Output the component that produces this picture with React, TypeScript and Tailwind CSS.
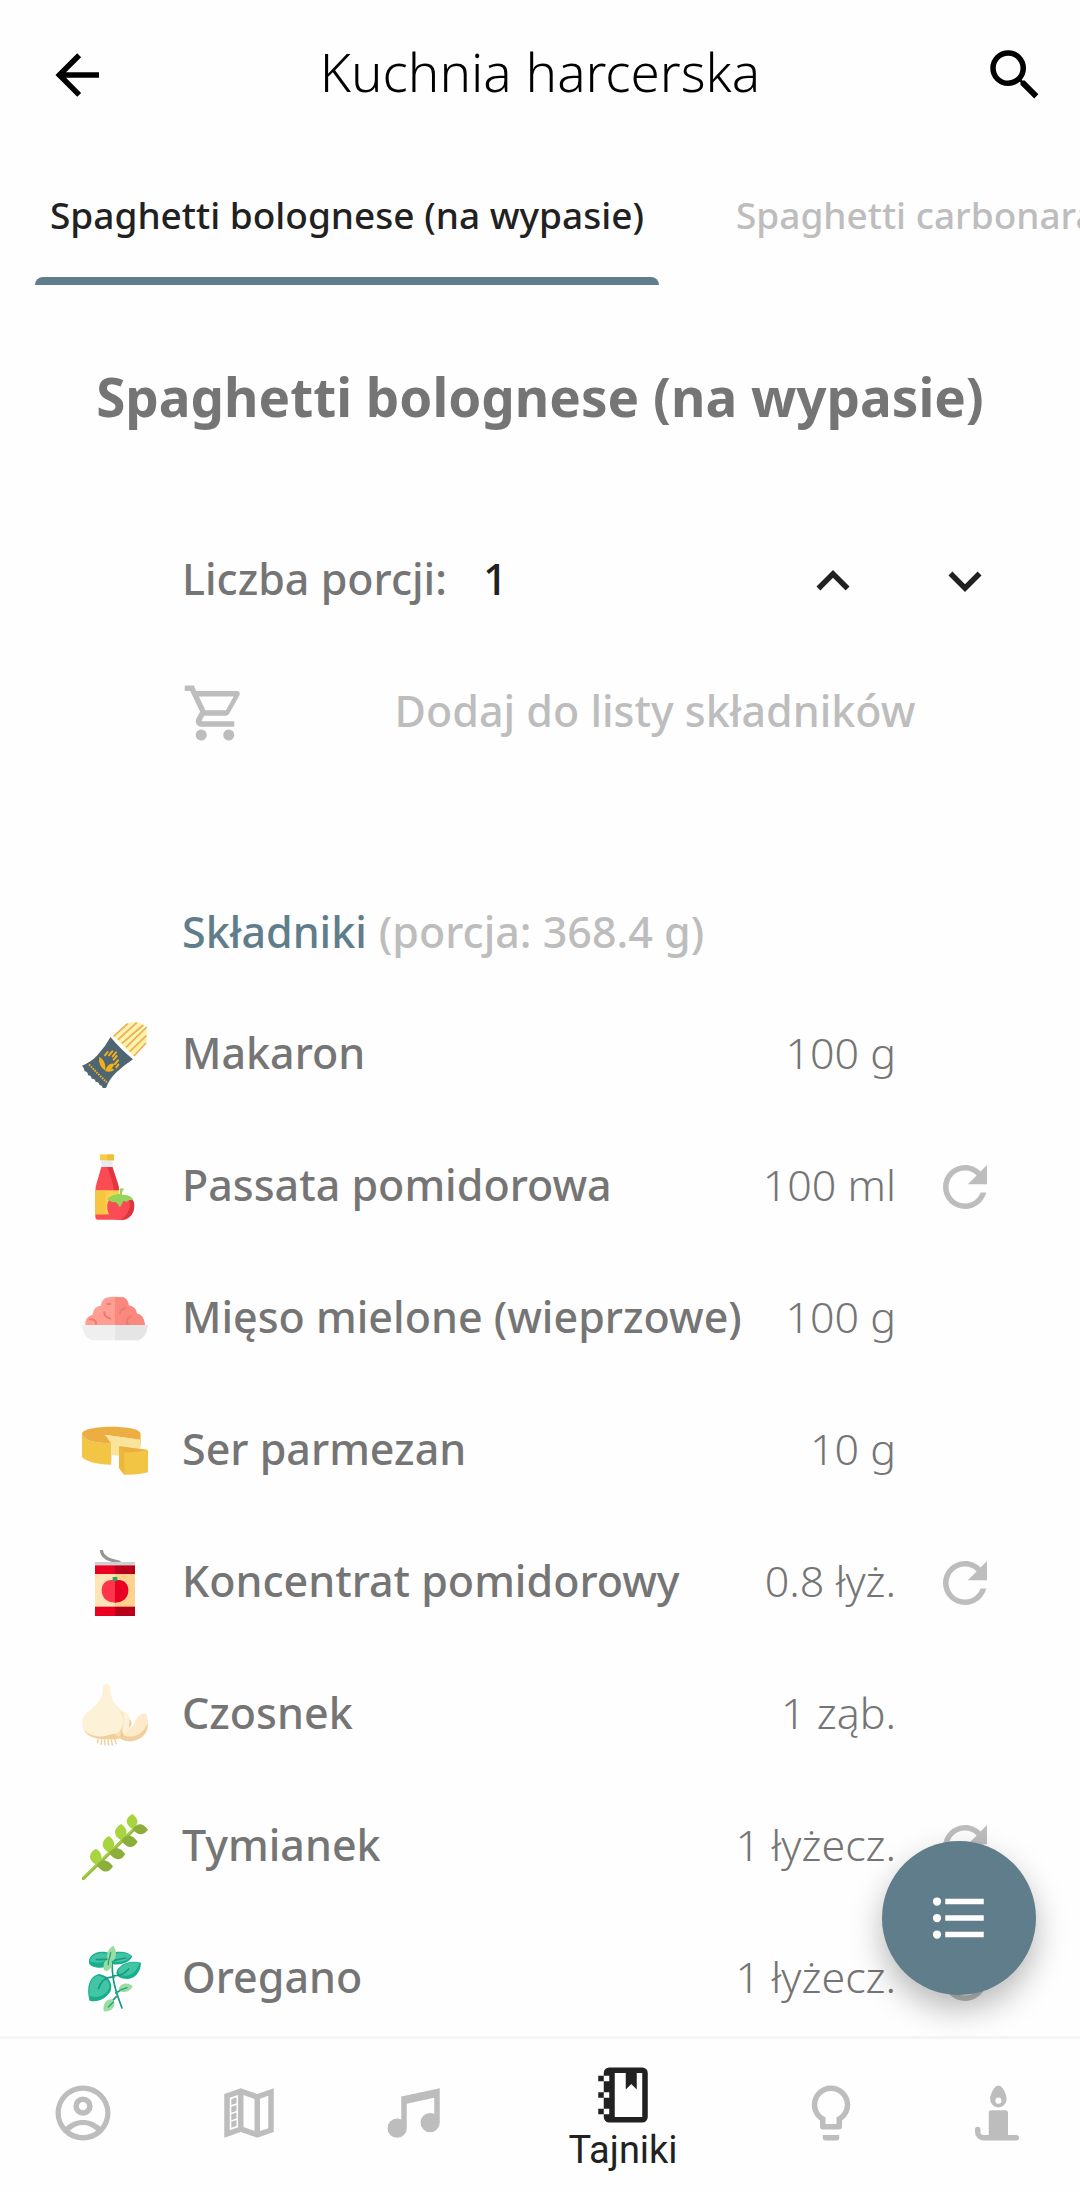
import type { ReactNode } from "react";

const icons = {
  back: "M20,11V13H8L13.5,18.5L12.08,19.92L4.16,12L12.08,4.08L13.5,5.5L8,11H20Z",
  search:
    "M9.5,3A6.5,6.5 0 0,1 16,9.5C16,11.11 15.41,12.59 14.44,13.73L14.71,14H15.5L20.5,19L19,20.5L14,15.5V14.71L13.73,14.44C12.59,15.41 11.11,16 9.5,16A6.5,6.5 0 0,1 3,9.5A6.5,6.5 0 0,1 9.5,3M9.5,5C7,5 5,7 5,9.5C5,12 7,14 9.5,14C12,14 14,12 14,9.5C14,7 12,5 9.5,5Z",
  up: "M7.41,15.41L12,10.83L16.59,15.41L18,14L12,8L6,14L7.41,15.41Z",
  down: "M7.41,8.58L12,13.17L16.59,8.58L18,10L12,16L6,10L7.41,8.58Z",
  cart: "M17,18A2,2 0 0,1 19,20A2,2 0 0,1 17,22C15.89,22 15,21.1 15,20C15,18.89 15.89,18 17,18M1,2H4.27L5.21,4H20A1,1 0 0,1 21,5C21,5.17 20.95,5.34 20.88,5.5L17.3,11.97C16.96,12.58 16.3,13 15.55,13H8.1L7.2,14.63L7.17,14.75A0.25,0.25 0 0,0 7.42,15H19V17H7C5.89,17 5,16.1 5,15C5,14.65 5.09,14.32 5.24,14.04L6.6,11.59L3,4H1V2M7,18A2,2 0 0,1 9,20A2,2 0 0,1 7,22C5.89,22 5,21.1 5,20C5,18.89 5.89,18 7,18M16,11L18.78,6H6.14L8.5,11H16Z",
  refresh:
    "M17.65,6.35C16.2,4.9 14.21,4 12,4A8,8 0 0,0 4,12A8,8 0 0,0 12,20C15.73,20 18.84,17.45 19.73,14H17.65C16.83,16.33 14.61,18 12,18A6,6 0 0,1 6,12A6,6 0 0,1 12,6C13.66,6 15.14,6.69 16.22,7.78L13,11H20V4L17.65,6.35Z",
  list: "M7,5H21V7H7V5M7,13V11H21V13H7M4,4.5A1.5,1.5 0 0,1 5.5,6A1.5,1.5 0 0,1 4,7.5A1.5,1.5 0 0,1 2.5,6A1.5,1.5 0 0,1 4,4.5M4,10.5A1.5,1.5 0 0,1 5.5,12A1.5,1.5 0 0,1 4,13.5A1.5,1.5 0 0,1 2.5,12A1.5,1.5 0 0,1 4,10.5M7,19V17H21V19H7M4,16.5A1.5,1.5 0 0,1 5.5,18A1.5,1.5 0 0,1 4,19.5A1.5,1.5 0 0,1 2.5,18A1.5,1.5 0 0,1 4,16.5Z",
  account:
    "M12,2A10,10 0 0,0 2,12A10,10 0 0,0 12,22A10,10 0 0,0 22,12A10,10 0 0,0 12,2M7.2,18.4C8.6,17.1 10.2,16.4 12,16.4C13.8,16.4 15.4,17.1 16.8,18.4C15.5,19.4 13.8,20.1 12,20.1C10.2,20.1 8.5,19.4 7.2,18.4M18.3,17C16.5,15.4 14.4,14.5 12,14.5C9.6,14.5 7.5,15.4 5.7,17C4.6,15.6 3.9,13.9 3.9,12A8.1,8.1 0 0,1 20.1,12C20.1,13.9 19.4,15.6 18.3,17M12,6A3.5,3.5 0 0,0 8.5,9.5A3.5,3.5 0 0,0 12,13A3.5,3.5 0 0,0 15.5,9.5A3.5,3.5 0 0,0 12,6M12,11A1.5,1.5 0 0,1 10.5,9.5A1.5,1.5 0 0,1 12,8A1.5,1.5 0 0,1 13.5,9.5A1.5,1.5 0 0,1 12,11Z",
  map: "M9,3L3,5.1V21L9,18.9L15,21L21,18.9V3L15,5.1L9,3M8,5.45V17.15L5,18.31V6.46L8,5.45M10,5.47L14,6.87V18.53L10,17.13V5.47M19,5.7V17.54L16,18.55V6.86L19,5.7M7.46,6.3L5.57,6.97V9.12L7.46,8.45V6.3M7.46,9.05L5.57,9.72V11.87L7.46,11.2V9.05M7.46,11.8L5.57,12.47V14.62L7.46,13.95V11.8M7.46,14.55L5.57,15.22V17.37L7.46,16.7V14.55Z",
  music:
    "M21,3V15.5A3.5,3.5 0 0,1 17.5,19A3.5,3.5 0 0,1 14,15.5A3.5,3.5 0 0,1 17.5,12C18.04,12 18.55,12.12 19,12.34V6.47L9,8.6V17.5A3.5,3.5 0 0,1 5.5,21A3.5,3.5 0 0,1 2,17.5A3.5,3.5 0 0,1 5.5,14C6.04,14 6.55,14.12 7,14.34V6L21,3Z",
  notebook:
    "M3,5H5V7H3V5M3,11H5V13H3V11M3,17H5V19H3V17M7,2H19A2,2 0 0,1 21,4V20A2,2 0 0,1 19,22H7A2,2 0 0,1 5,20V19H7V17H5V13H7V11H5V7H7V5H5V4A2,2 0 0,1 7,2M9,4V20H19V4H17V10L15,8L13,10V4H9Z",
  bulb: "M12,2A7,7 0 0,1 19,9C19,11.38 17.81,13.47 16,14.74V17A1,1 0 0,1 15,18H9A1,1 0 0,1 8,17V14.74C6.19,13.47 5,11.38 5,9A7,7 0 0,1 12,2M9,21V20H15V21A1,1 0 0,1 14,22H10A1,1 0 0,1 9,21M12,4A5,5 0 0,0 7,9C7,11.05 8.23,12.81 10,13.58V16H14V13.58C15.77,12.81 17,11.05 17,9A5,5 0 0,0 12,4Z",
  candle:
    "M12.5,2C10.84,2 9.5,5.34 9.5,7A3,3 0 0,0 12.5,10A3,3 0 0,0 15.5,7C15.5,5.34 14.16,2 12.5,2M12.5,6.4A1.1,1.1 0 0,1 13.6,7.5A1.1,1.1 0 0,1 12.5,8.6A1.1,1.1 0 0,1 11.4,7.5A1.1,1.1 0 0,1 12.5,6.4M10,11A1,1 0 0,0 9,12V20H7A1,1 0 0,1 6,19V18A1,1 0 0,0 5,17A1,1 0 0,0 4,18V19A3,3 0 0,0 7,22H19A1,1 0 0,0 20,21A1,1 0 0,0 19,20H16V12A1,1 0 0,0 15,11H10Z",
};

function Icon({ name }: { name: keyof typeof icons }) {
  return (
    <svg viewBox="0 0 24 24" fill="currentColor" fillRule="evenodd" aria-hidden="true" className="size-[66px] shrink-0">
      <path d={icons[name]} />
    </svg>
  );
}

function Food({ box, children }: { box: string; children: ReactNode }) {
  return (
    <svg viewBox={box} aria-hidden="true" className="size-[66px] shrink-0">
      {children}
    </svg>
  );
}

const pasta = (
  <Food box="69 66 198 198">
    <path d="M163 109 204 70l15-3 20-1 13 11 12 10-1 38-38 44z" fill="#fff0a0" />
    <g stroke="#eaae5c" strokeWidth="5">
      <path d="M164 109 206 71M177 119l56-51M189 130l64-55M201 142l62-61M212 155l50-48M225 168l36-39" />
    </g>
    <g stroke="#fffdf0" strokeWidth="2">
      <path d="M171 114l54-48M183 125l62-56M195 137l68-63M207 149l56-55" />
    </g>
    <path d="M155 112q32 38 67 66-27 18-49 38-22 20-32 48h-10q-1-9-10-9 0-10-11-9-1-11-12-10-1-10-11-10 0-11-10-12 0-10-8-17 27-10 46-31 24-26 40-56z" fill="#506572" />
    <path d="M90 193q28 31 54 54" stroke="#edac25" strokeWidth="6" strokeDasharray="5 3" fill="none" />
    <g fill="#f2b019">
      <path d="M139 212q-23-16-18-42 22 13 18 42zM139 211q9-25 28-19-8 19-28 19zM139 214q13-18 27-4-12 8-27 4z" />
    </g>
    <path d="M138 166l8-10m4 10 10-12m1 15 10-12m-7 22 9-11m-5 24 9-11m-5 21 6-8" stroke="#f2b019" strokeWidth="6" strokeLinecap="round" />
  </Food>
);

const passata = (
  <Food box="69 461 198 198">
    <path d="M127 480h34v22h-34z" fill="#e8ebee" />
    <path d="M123 462h42v18h-42z" fill="#f7cb45" />
    <path d="M144 462h21v18h-21z" fill="#edb92f" opacity=".6" />
    <path d="M127 500h33l16 48q4 12 4 24v86h-65q-6 0-6-8v-78q0-12 4-24z" fill="#fb4b55" />
    <path d="M145 500h15l16 48q4 12 4 24v20h-16v-24q0-12-5-25z" fill="#e3343f" />
    <path d="M109 570h71v72h-71z" fill="#fdd04e" />
    <path d="M109 570h30v72h-30z" fill="#f8c543" />
    <path d="M169 597c-33-14-35 59 10 62 36 3 46-22 46-42 0-22-25-37-56-20z" fill="#fb4b55" />
    <path d="M207 590c20 6 19 20 19 28 0 24-19 41-42 41 25-15 35-42 23-69z" fill="#df333e" />
    <path d="M181 567q8-6 15 0-8 4-7 16 25-1 34 15-16 0-20 7-7-4-11-2-2 10-10 18-5-12-13-16-8 3-20-6-1-3-5-2 15-15 38-16 1-12-1-14z" fill="#95d55b" />
  </Food>
);

const meat = (
  <Food box="69 78 198 198">
    <path d="M79 196q-2-24 19-31 4 0 4-5 1-20 24-23 1-18 15-24 26-5 53 0 14 7 15 24 22 3 24 24 22 4 25 35z" fill="#ff9f94" />
    <path d="M168 112h26q14 7 15 24 22 3 24 24 22 4 25 35h-90z" fill="#fb887e" />
    <path d="M93 178q18-1 18 13M136 157q-1 13 18 19M145 132h9M183 160q0-9 15-16M206 193q-7-18 9-24" stroke="#ee7970" strokeWidth="6" fill="none" strokeLinecap="round" />
    <path d="M69 195h198q-5 38-29 46H98q-24-8-29-46z" fill="#efefef" />
    <path d="M168 195h99q-5 38-29 46h-70z" fill="#e5e5e5" />
  </Food>
);

const cheese = (
  <Food box="69 474 198 198">
    <path d="M69 522q4 26 88 28v64q-70-2-88-23z" fill="#f3c545" />
    <path d="M69 522c0-28 176-29 176 0v35l-48 6-40-13q-84-2-88-28z" fill="#ecae42" />
    <path d="M138 524l106 15v49h-59l-28-3v-35z" fill="#fae49b" />
    <path d="M138 524l106 15q3-10 0-18v36l-61 5-26-13z" fill="#fae49b" />
    <path d="M180 559l87 11v67q-30 9-72 7l-15-21z" fill="#f3c545" />
    <path d="M180 559l87 11q-32 8-71 7z" fill="#ecae42" />
    <path d="M180 559l16 18v67l-16-21z" fill="#edb63c" />
    <path d="M159 588h18v30h-20z" fill="#fefefe" />
  </Food>
);

const can = (
  <Food box="69 90 198 198">
    <path d="M127 90q2 22 29 30l28 8" stroke="#969696" strokeWidth="10" fill="none" />
    <path d="M108 126h120v10H108z" fill="#ced1d4" />
    <path d="M108 136h60v152h-60z" fill="#e90021" />
    <path d="M168 136h60v152h-60z" fill="#b8001b" />
    <path d="M108 162h60v98h-60z" fill="#ffe4b5" />
    <path d="M168 162h60v98h-60z" fill="#ffd28e" />
    <path d="M168 181c-26-5-40 9-40 30 0 22 15 37 40 37z" fill="#ff354c" />
    <path d="M168 181c26-5 40 9 40 30 0 22-15 37-40 37z" fill="#e70024" />
    <path d="M161 171h14v10l-7 4-7-4z" fill="#23a65a" />
  </Food>
);

const garlic = (
  <Food box="69 486 198 198">
    <path d="M118 655l-2 13m13-13-3 18m11-18 1 20m9-20 1 20m8-22 4 22m5-22 7 18" stroke="#f0cc96" strokeWidth="4" strokeLinecap="round" />
    <path d="M186 620c15 14 36 6 42-15 8-15 18-26 33-25 9 22 8 46-1 61-16 22-53 29-76 16z" fill="#fceacb" />
    <path d="M267 608c-2 32-18 47-42 54-17 4-33 0-43-9l3-10c34 17 68 1 82-35z" fill="#efcf9b" />
    <path d="M133 496q11-10 20 2 1 32 12 49 10 15 30 28c23 13 25 36 16 49l-13 20q-12 18-60 14-46 1-60-20-19-36 5-59 38-28 47-53z" fill="#fdf1d8" />
    <path d="M75 631q32 28 75 14 25-8 36 2 5 12-40 11-54 0-71-27z" fill="#f0cf9b" />
    <path d="M176 568c27 21 20 59-7 76l19 9c2-31 12-60 2-75z" fill="#f9dfb3" />
    <path d="M212 596q12 18-2 29zM186 626l10 22-12 8z" fill="#efcb92" />
  </Food>
);

const thyme = (
  <Food box="69 72 198 198">
    <path d="M73 265 225 118" stroke="#8eb83c" strokeWidth="10" strokeLinecap="round" />
    <path d="M73 262 222 118" stroke="#a5d143" strokeWidth="5" strokeLinecap="round" />
    <g fill="#a8d43f">
      <path d="M111 224c-26-16-22-36 0-48 22 14 22 34 0 48z" />
      <path d="M149 188c-26-16-22-36 0-50 22 14 22 36 0 50z" />
      <path d="M186 151c-26-16-22-36 0-49 22 14 22 35 0 49z" />
      <path d="M220 117c-24-16-21-33 0-45 20 14 21 31 0 45z" />
    </g>
    <g fill="#8caf3c">
      <path d="M113 226c17-23 32-18 49 3-12 21-31 22-49-3z" />
      <path d="M150 189c17-23 32-18 49 3-12 21-31 22-49-3z" />
      <path d="M187 152c17-23 32-18 49 3-12 21-31 22-49-3z" />
      <path d="M221 117c15-20 30-18 46 2-14 18-30 20-46-2z" />
    </g>
  </Food>
);

const oregano = (
  <Food box="69 468 198 198">
    <g fill="#18ad8c">
      <path d="M91 522c-8-25 25-46 61-32 34-10 57-4 68 9-9 20-33 27-59 24-28 16-61 11-70-1z" />
      <path d="M246 518c-1 36-30 60-65 44-11-7-10-15-5-24 13-20 41-28 70-20z" />
      <path d="M92 632c-11-35-2-75 29-80 28 5 41 28 34 51-13 23-39 35-63 29z" />
    </g>
    <g fill="#42c5a5">
      <path d="M92 514c6-24 35-29 61-20-4 20-34 30-61 20zM158 514c-3-25 34-34 58-18-8 17-31 23-58 18z" />
      <path d="M240 519c-5 29-31 44-57 36-18-20 21-43 57-36zM92 618c-4-38 7-61 29-61 28 10 37 29 25 46-14 16-35 23-54 15z" />
    </g>
    <path d="M160 502c-3 60 7 95 29 152M165 562q-32-6-47 34M166 557q24 2 43-20M170 609l28-16M172 620l-22 23M112 509l38-1M161 512l39-8" stroke="#199b82" strokeWidth="5" fill="none" strokeLinecap="round" />
    <g fill="#99dda2">
      <path d="M145 508c-4-22 7-35 18-41 12 17 10 39-3 47zM135 539c-5-19 4-31 18-32 12 12 7 31-12 37zM179 600c2-21 27-26 42-11-8 17-29 23-42 11zM134 664c-4-23 10-40 26-36 16 15 0 40-26 36z" />
    </g>
    <path d="M148 524q-1-12 4-22l3-14M182 601l22-8M148 651l15-15" stroke="#299f86" strokeWidth="4" fill="none" strokeLinecap="round" />
  </Food>
);

const ingredients = [
  { name: "Makaron", amount: "100 g", swap: false, art: pasta },
  { name: "Passata pomidorowa", amount: "100 ml", swap: true, art: passata },
  { name: "Mięso mielone (wieprzowe)", amount: "100 g", swap: false, art: meat },
  { name: "Ser parmezan", amount: "10 g", swap: false, art: cheese },
  { name: "Koncentrat pomidorowy", amount: "0.8 łyż.", swap: true, art: can },
  { name: "Czosnek", amount: "1 ząb.", swap: false, art: garlic },
  { name: "Tymianek", amount: "1 łyżecz.", swap: true, art: thyme },
  { name: "Oregano", amount: "1 łyżecz.", swap: true, art: oregano },
];

const navItems: { label: string; icon: keyof typeof icons; active?: boolean }[] = [
  { label: "Konto", icon: "account" },
  { label: "Mapa", icon: "map" },
  { label: "Śpiewnik", icon: "music" },
  { label: "Tajniki", icon: "notebook", active: true },
  { label: "Pomysły", icon: "bulb" },
  { label: "Świeca", icon: "candle" },
];

export default function App() {
  return (
    <div className="flex h-screen flex-col bg-[#fefefe] font-['Noto_Sans',sans-serif] text-[#757575]">
      <header className="flex h-[150px] shrink-0 items-center pr-8 pl-11 text-black">
        <button type="button" aria-label="Wstecz">
          <Icon name="back" />
        </button>
        <h1 className="flex-1 pr-3 pb-1.5 text-center text-[53px] font-light">Kuchnia harcerska</h1>
        <button type="button" aria-label="Szukaj">
          <Icon name="search" />
        </button>
      </header>

      <div role="tablist" className="flex h-[135px] shrink-0 gap-[62px] overflow-hidden pl-[35px] text-[37px] font-medium whitespace-nowrap">
        <button type="button" role="tab" aria-selected="true" className="flex shrink-0 flex-col text-[#212121]">
          <span className="flex flex-1 items-center px-[15px] pt-0.5">Spaghetti bolognese (na wypasie)</span>
          <span className="h-2 w-full rounded-t-lg bg-[#607d8b]" />
        </button>
        <button type="button" role="tab" aria-selected="false" className="flex shrink-0 flex-col text-[#bdbdbd]">
          <span className="flex flex-1 items-center px-[15px] pt-0.5">Spaghetti carbonara</span>
          <span className="h-2 w-full" />
        </button>
      </div>

      <div className="relative min-h-0 flex-1">
        <main className="h-full overflow-y-auto px-[82px] [scrollbar-width:none]">
          <h2 className="flex h-[230px] items-center justify-center pb-1.5 text-[53px] font-bold whitespace-nowrap">
            Spaghetti bolognese (na wypasie)
          </h2>

          <div className="flex h-[132px] items-center pl-[100px] text-[43px] font-medium">
            <span className="pb-1">Liczba porcji:</span>
            <output className="ml-9 flex-1 pb-1 text-[#212121]">1</output>
            <button type="button" aria-label="Więcej porcji" className="mr-[66px] text-[#212121]">
              <Icon name="up" />
            </button>
            <button type="button" aria-label="Mniej porcji" className="text-[#212121]">
              <Icon name="down" />
            </button>
          </div>

          <div className="flex h-[132px] pl-[100px]">
            <button type="button" className="flex flex-1 items-center gap-16 text-[43px] font-medium text-[#bdbdbd]">
              <Icon name="cart" />
              <span className="flex-1 pb-1 text-center whitespace-nowrap">Dodaj do listy składników</span>
            </button>
          </div>

          <h3 className="mt-24 flex h-[114px] items-center gap-3 pl-[100px] text-[43px] font-medium text-[#607d8b]">
            Składniki
            <span className="text-[#bdbdbd]">(porcja: 368.4 g)</span>
          </h3>

          <ul>
            {ingredients.map((item) => (
              <li key={item.name} className="flex h-[132px] items-center text-[43px]">
                {item.art}
                <span className="ml-[34px] flex-1 pb-1 font-medium whitespace-nowrap">{item.name}</span>
                <span className="pb-1 font-light whitespace-nowrap">{item.amount}</span>
                <span className="ml-9 w-[66px]">
                  {item.swap && (
                    <button type="button" aria-label={`Zamień: ${item.name}`} className="block text-[#bdbdbd]">
                      <Icon name="refresh" />
                    </button>
                  )}
                </span>
              </li>
            ))}
          </ul>
        </main>

        <button
          type="button"
          aria-label="Spis przepisów"
          className="absolute right-11 bottom-[41px] flex size-[154px] items-center justify-center rounded-full bg-[#607d8b] text-white shadow-[0_14px_32px_rgba(0,0,0,0.28)]"
        >
          <Icon name="list" />
        </button>
      </div>

      <nav className="flex h-[156px] shrink-0 border-t-[3px] border-[#f5f5f5] text-[#bdbdbd]">
        {navItems.map((item) =>
          item.active ? (
            <button key={item.label} type="button" aria-current="page" className="flex flex-[3] basis-0 flex-col items-center justify-center pt-0.5 font-['Roboto',sans-serif] text-[38px] leading-11 text-[#212121]">
              <Icon name={item.icon} />
              {item.label}
            </button>
          ) : (
            <button key={item.label} type="button" aria-label={item.label} className="flex flex-[2] basis-0 items-center justify-center pb-1.5">
              <Icon name={item.icon} />
            </button>
          ),
        )}
      </nav>
    </div>
  );
}
